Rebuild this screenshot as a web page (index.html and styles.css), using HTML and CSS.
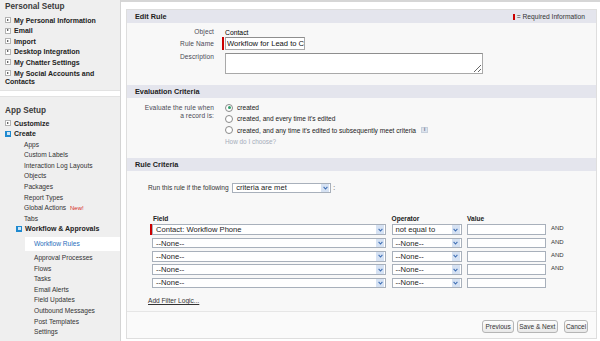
FILE: index.html
```html
<!DOCTYPE html>
<html lang="en">
  <head>
    <meta charset="UTF-8" />
    <meta name="viewport" content="width=device-width, initial-scale=1.0" />
    <title>Edit Rule</title>
    <link rel="stylesheet" href="styles.css">
  </head>
  <body>
    <div class="page">
      <aside class="sidebar">
        <div class="side-box personal">
          <div class="side-head">Personal Setup</div>
          <ul class="tree">
            <li class="node"><i class="ico plus"></i>My Personal Information</li>
            <li class="node"><i class="ico plus"></i>Email</li>
            <li class="node"><i class="ico plus"></i>Import</li>
            <li class="node"><i class="ico plus"></i>Desktop Integration</li>
            <li class="node"><i class="ico plus"></i>My Chatter Settings</li>
            <li class="node"><i class="ico plus"></i>My Social Accounts and Contacts</li>
          </ul>
        </div>
        <div class="side-box app">
          <div class="side-head">App Setup</div>
          <ul class="tree">
            <li class="node"><i class="ico plus"></i>Customize</li>
            <li class="node"><i class="ico minus"></i>Create</li>
            <li class="leaf">Apps</li>
            <li class="leaf">Custom Labels</li>
            <li class="leaf">Interaction Log Layouts</li>
            <li class="leaf">Objects</li>
            <li class="leaf">Packages</li>
            <li class="leaf">Report Types</li>
            <li class="leaf">Global Actions <span class="new">New!</span></li>
            <li class="leaf">Tabs</li>
            <li class="node sub"><i class="ico minus"></i>Workflow &amp; Approvals</li>
            <li class="leaf deep current">Workflow Rules</li>
            <li class="leaf deep">Approval Processes</li>
            <li class="leaf deep">Flows</li>
            <li class="leaf deep">Tasks</li>
            <li class="leaf deep">Email Alerts</li>
            <li class="leaf deep">Field Updates</li>
            <li class="leaf deep">Outbound Messages</li>
            <li class="leaf deep">Post Templates</li>
            <li class="leaf deep">Settings</li>
          </ul>
        </div>
      </aside>

      <main class="main">
        <div class="panel">
          <div class="sec-head">
            <h2>Edit Rule</h2>
            <span class="req"><i class="req-bar"></i>= Required Information</span>
          </div>
          <div class="sec-body edit">
            <div class="frow obj">
              <label>Object</label>
              <div class="val">Contact</div>
            </div>
            <div class="frow name">
              <label>Rule Name</label>
              <i class="req-bar tall"></i>
              <input class="inp" type="text" value="Workflow for Lead to Contact" readonly>
            </div>
            <div class="frow desc">
              <label>Description</label>
              <textarea class="ta"></textarea>
            </div>
          </div>

          <div class="sec-head">
            <h2>Evaluation Criteria</h2>
          </div>
          <div class="sec-body eval">
            <div class="frow desc">
              <label class="two">Evaluate the rule when<br>a record is:</label>
              <div class="opts">
                <div class="opt"><span class="radio on"></span>created</div>
                <div class="opt"><span class="radio"></span>created, and every time it's edited</div>
                <div class="opt"><span class="radio"></span>created, and any time it's edited to subsequently meet criteria<span class="info">i</span></div>
                <div class="opt help">How do I choose?</div>
              </div>
            </div>
          </div>

          <div class="sec-head">
            <h2>Rule Criteria</h2>
          </div>
          <div class="sec-body crit">
            <div class="runrow">
              Run this rule if the following
              <div class="sel when"><span class="txt">criteria are met</span><span class="arr"><svg width="5" height="4" viewBox="0 0 5 4"><path d="M0.6 0.8 L2.5 3 L4.4 0.8" fill="none" stroke="#3f6fb5" stroke-width="1.1"/></svg></span></div>
              <span class="colon">:</span>
            </div>

            <div class="filters">
              <div class="fh field">Field</div>
              <div class="fh">Operator</div>
              <div class="fh">Value</div>
              <div></div>

              <div class="fcell"><i class="req-bar row"></i><div class="sel"><span class="txt">Contact: Workflow Phone</span><span class="arr"><svg width="5" height="4" viewBox="0 0 5 4"><path d="M0.6 0.8 L2.5 3 L4.4 0.8" fill="none" stroke="#3f6fb5" stroke-width="1.1"/></svg></span></div></div>
              <div class="sel"><span class="txt">not equal to</span><span class="arr"><svg width="5" height="4" viewBox="0 0 5 4"><path d="M0.6 0.8 L2.5 3 L4.4 0.8" fill="none" stroke="#3f6fb5" stroke-width="1.1"/></svg></span></div>
              <div class="box"></div>
              <div class="and">AND</div>

              <div class="fcell"><i class="req-bar row none"></i><div class="sel"><span class="txt">--None--</span><span class="arr"><svg width="5" height="4" viewBox="0 0 5 4"><path d="M0.6 0.8 L2.5 3 L4.4 0.8" fill="none" stroke="#3f6fb5" stroke-width="1.1"/></svg></span></div></div>
              <div class="sel"><span class="txt">--None--</span><span class="arr"><svg width="5" height="4" viewBox="0 0 5 4"><path d="M0.6 0.8 L2.5 3 L4.4 0.8" fill="none" stroke="#3f6fb5" stroke-width="1.1"/></svg></span></div>
              <div class="box"></div>
              <div class="and">AND</div>

              <div class="fcell"><i class="req-bar row none"></i><div class="sel"><span class="txt">--None--</span><span class="arr"><svg width="5" height="4" viewBox="0 0 5 4"><path d="M0.6 0.8 L2.5 3 L4.4 0.8" fill="none" stroke="#3f6fb5" stroke-width="1.1"/></svg></span></div></div>
              <div class="sel"><span class="txt">--None--</span><span class="arr"><svg width="5" height="4" viewBox="0 0 5 4"><path d="M0.6 0.8 L2.5 3 L4.4 0.8" fill="none" stroke="#3f6fb5" stroke-width="1.1"/></svg></span></div>
              <div class="box"></div>
              <div class="and">AND</div>

              <div class="fcell"><i class="req-bar row none"></i><div class="sel"><span class="txt">--None--</span><span class="arr"><svg width="5" height="4" viewBox="0 0 5 4"><path d="M0.6 0.8 L2.5 3 L4.4 0.8" fill="none" stroke="#3f6fb5" stroke-width="1.1"/></svg></span></div></div>
              <div class="sel"><span class="txt">--None--</span><span class="arr"><svg width="5" height="4" viewBox="0 0 5 4"><path d="M0.6 0.8 L2.5 3 L4.4 0.8" fill="none" stroke="#3f6fb5" stroke-width="1.1"/></svg></span></div>
              <div class="box"></div>
              <div class="and">AND</div>

              <div class="fcell"><i class="req-bar row none"></i><div class="sel"><span class="txt">--None--</span><span class="arr"><svg width="5" height="4" viewBox="0 0 5 4"><path d="M0.6 0.8 L2.5 3 L4.4 0.8" fill="none" stroke="#3f6fb5" stroke-width="1.1"/></svg></span></div></div>
              <div class="sel"><span class="txt">--None--</span><span class="arr"><svg width="5" height="4" viewBox="0 0 5 4"><path d="M0.6 0.8 L2.5 3 L4.4 0.8" fill="none" stroke="#3f6fb5" stroke-width="1.1"/></svg></span></div>
              <div class="box"></div>
              <div></div>
            </div>

            <a class="logic" href="#">Add Filter Logic...</a>
          </div>

          <div class="btnbar">
            <button class="btn prev">Previous</button>
            <button class="btn next">Save &amp; Next</button>
            <button class="btn cancel">Cancel</button>
          </div>
        </div>
      </main>
    </div>
  </body>
</html>
```

FILE: styles.css
```css
html,
body {
  margin: 0;
  padding: 0;
  background: #fff;
  font-family: "Liberation Sans", Arial, sans-serif;
  color: #222;
}

.page {
  display: flex;
  height: 341px;
  overflow: hidden;
}

/* left setup tree */
.sidebar {
  width: 120px;
  border-right: 1px solid #d4d4d4;
  display: flex;
  flex-direction: column;
}

.side-box {
  background: #efefef;
}

.personal {
  height: 91px;
  padding-top: 2px;
  box-sizing: border-box;
  border-bottom: 1px solid #e2e2e2;
}

.app {
  flex: 1;
  margin-top: 5px;
  padding-top: 9px;
  border-top: 1px solid #e2e2e2;
}

.side-head {
  font-weight: bold;
  font-size: 8.2px;
  line-height: 9px;
  color: #3b3b3b;
  padding-left: 5px;
}

.tree {
  list-style: none;
  margin: 4.6px 0 0;
  padding: 0;
}

.app .tree {
  margin-top: 3.5px;
}

.node {
  font-weight: bold;
  font-size: 7px;
  line-height: 8.6px;
  padding: 1px 4px 1px 5px;
  color: #222;
}

.node.sub {
  padding-left: 16px;
}

.leaf {
  font-size: 6.6px;
  line-height: 8.6px;
  padding: 1px 0 1px 24px;
  color: #333;
}

.leaf.deep {
  padding-left: 34px;
}

.leaf.current {
  background: #fff;
  color: #2a6ebb;
  margin: 2px 0 2px 25px;
  padding: 2.7px 0 2.7px 9px;
}

.new {
  color: #d52b1e;
  font-size: 6px;
  margin-left: 2px;
}

.ico {
  display: inline-block;
  position: relative;
  width: 6px;
  height: 6px;
  margin-right: 3px;
  vertical-align: -0.5px;
  box-sizing: border-box;
}

.ico.plus {
  border: 1px solid #b3b3b3;
  background: #fff;
}

.ico.plus::after {
  content: "";
  position: absolute;
  left: 1.3px;
  top: 0.5px;
  border-left: 2px solid #333;
  border-top: 1.5px solid transparent;
  border-bottom: 1.5px solid transparent;
}

.ico.minus {
  background: #1f8ad0;
}

.ico.minus::after {
  content: "";
  position: absolute;
  left: 1.5px;
  top: 1.5px;
  width: 3px;
  height: 3px;
  background: #cfe6f7;
}

/* main form */
.main {
  flex: 1;
  border-top: 2px solid #d6d6d6;
  padding: 7px 3px 0 5px;
}

.panel {
  border: 1px solid #dedede;
  background: #f8f8f8;
}

.sec-head {
  display: flex;
  justify-content: space-between;
  align-items: center;
  height: 13px;
  background: #e4e5ed;
  padding: 0 11px 0 8px;
}

.sec-head h2 {
  margin: 0;
  font-size: 7.3px;
  font-weight: bold;
  color: #222;
}

.req {
  font-size: 6.7px;
  color: #333;
  display: flex;
  align-items: center;
}

.req-bar {
  display: inline-block;
  width: 1.5px;
  height: 6px;
  background: #c00;
  margin-right: 2px;
}

.req-bar.tall {
  width: 2px;
  height: 12.7px;
  margin: 0 1px 0 -3px;
}

.sec-body {
  box-sizing: border-box;
}

.edit {
  height: 62px;
  padding-top: 4px;
}

.eval {
  height: 60px;
  padding-top: 4px;
}

.crit {
  height: 140px;
  padding: 11.7px 0 0 21px;
}

.frow {
  display: flex;
  align-items: center;
}

.frow label {
  width: 87px;
  flex: none;
  text-align: right;
  font-size: 6.6px;
  line-height: 8px;
  color: #4a4a56;
  margin-right: 11px;
  letter-spacing: 0.1px;
}

.frow.obj {
  height: 10px;
}

.frow.name {
  height: 13px;
}

.frow.desc {
  align-items: flex-start;
  margin-top: 3.3px;
}

.frow label.two {
  padding-top: 1.7px;
}

.eval .frow.desc {
  margin-top: 0;
}

.val {
  font-size: 6.8px;
  color: #000;
}

.inp {
  width: 80px;
  height: 12.7px;
  box-sizing: border-box;
  border: 1px solid #a9a9a9;
  border-top-color: #8e8e8e;
  background: #fff;
  font-family: "Liberation Sans", Arial, sans-serif;
  font-size: 7.6px;
  color: #111;
  margin: 0;
  padding: 0 0 0 1px;
  outline: none;
}

.ta {
  width: 258px;
  height: 21px;
  box-sizing: border-box;
  border: 1px solid #a9a9a9;
  border-top-color: #8e8e8e;
  background: #fff;
  margin: 0;
  padding: 0;
  font-size: 7px;
}

.opt {
  display: flex;
  align-items: center;
  height: 11.3px;
  font-size: 6.6px;
  color: #222;
}

.radio {
  display: inline-flex;
  align-items: center;
  justify-content: center;
  width: 8px;
  height: 8px;
  box-sizing: border-box;
  border: 1px solid #8a8a8a;
  border-radius: 50%;
  background: #fff;
  margin-right: 4px;
}

.radio.on::after {
  content: "";
  width: 3px;
  height: 3px;
  border-radius: 50%;
  background: #2f9e6a;
}

.info {
  display: inline-block;
  width: 7px;
  height: 6px;
  margin-left: 5px;
  background: #dde4ee;
  border: 1px solid #c7d0dc;
  box-sizing: border-box;
  font-size: 4.5px;
  line-height: 4px;
  text-align: center;
  color: #52627a;
  font-weight: bold;
}

.opt.help {
  color: #a5adba;
  font-size: 6.4px;
}

.runrow {
  display: flex;
  align-items: center;
  height: 10.6px;
  font-size: 6.6px;
  color: #333;
}

.sel {
  display: flex;
  align-items: center;
  height: 10.6px;
  box-sizing: border-box;
  border: 1px solid #a8b0bb;
  background: #fff;
  flex: 1;
  min-width: 0;
}

.sel .txt {
  flex: 1;
  padding-left: 3px;
  font-size: 7.6px;
  color: #222;
  white-space: nowrap;
  overflow: hidden;
}

.sel .arr {
  width: 8px;
  height: 8.6px;
  background: #d6e2f3;
  display: flex;
  align-items: center;
  justify-content: center;
  margin-right: 1px;
}

.sel.when {
  flex: none;
  width: 99px;
  margin-left: 3.5px;
}

.colon {
  margin-left: 2px;
}

.filters {
  display: grid;
  grid-template-columns: 236px 70px 78.5px auto;
  grid-template-rows: 7px repeat(5, 10.6px);
  column-gap: 5.5px;
  row-gap: 2.7px;
  margin: 21.5px 0 0 2px;
}

.fh {
  font-size: 6.6px;
  font-weight: bold;
  line-height: 7px;
  color: #222;
}

.fh.field {
  padding-left: 3px;
}

.fcell {
  display: flex;
}

.req-bar.row {
  width: 2px;
  height: 10.6px;
  margin: 0;
}

.req-bar.none {
  background: transparent;
}

.box {
  border: 1px solid #a8b0bb;
  background: #fff;
}

.and {
  font-size: 6px;
  color: #333;
  line-height: 8px;
}

.logic {
  display: block;
  width: max-content;
  margin: 8.7px 0 0;
  font-size: 6.6px;
  line-height: 8px;
  color: #333;
}

.btnbar {
  height: 27px;
  box-sizing: border-box;
  border-top: 1px solid #e6e6e6;
  background: #fafafa;
  display: flex;
  justify-content: flex-end;
  align-items: flex-start;
  padding: 8px 8px 0 0;
}

.btn {
  height: 13.3px;
  box-sizing: border-box;
  border: 1px solid #b5b5b5;
  border-radius: 3px;
  background: linear-gradient(#fdfdfd, #e8e8e8);
  font-family: "Liberation Sans", Arial, sans-serif;
  font-size: 6.5px;
  color: #333;
  padding: 0;
}

.prev {
  width: 32.7px;
}

.next {
  width: 40.7px;
  margin-left: 2.6px;
}

.cancel {
  width: 24px;
  margin-left: 6.3px;
}
```
